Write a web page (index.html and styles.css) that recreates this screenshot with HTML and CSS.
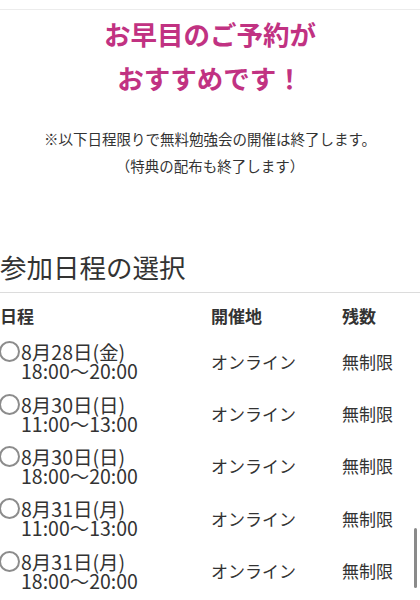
FILE: index.html
```html
<!DOCTYPE html>
<html lang="ja">
<head>
<meta charset="utf-8">
<title>参加日程の選択</title>
<link rel="stylesheet" href="styles.css">
</head>
<body>
<div class="topbar"></div>
<section class="intro">
  <h1 class="lead">お早目のご予約が<br>おすすめです！</h1>
  <p class="note">※以下日程限りで無料勉強会の開催は終了します。<br>（特典の配布も終了します）</p>
</section>
<section class="schedule">
  <h2 class="title">参加日程の選択</h2>
  <div class="table">
    <div class="row head">
      <div>日程</div><div>開催地</div><div>残数</div>
    </div>
    <label class="row">
      <div class="date"><span class="radio"></span><span>8月28日(金)<br>18:00〜20:00</span></div>
      <div>オンライン</div><div>無制限</div>
    </label>
    <label class="row">
      <div class="date"><span class="radio"></span><span>8月30日(日)<br>11:00〜13:00</span></div>
      <div>オンライン</div><div>無制限</div>
    </label>
    <label class="row">
      <div class="date"><span class="radio"></span><span>8月30日(日)<br>18:00〜20:00</span></div>
      <div>オンライン</div><div>無制限</div>
    </label>
    <label class="row">
      <div class="date"><span class="radio"></span><span>8月31日(月)<br>11:00〜13:00</span></div>
      <div>オンライン</div><div>無制限</div>
    </label>
    <label class="row">
      <div class="date"><span class="radio"></span><span>8月31日(月)<br>18:00〜20:00</span></div>
      <div>オンライン</div><div>無制限</div>
    </label>
  </div>
</section>
<div class="scrollbar"></div>
</body>
</html>
```
FILE: styles.css
```css
html, body {
  margin: 0;
  padding: 0;
  background: #fff;
  color: #333;
  font-family: "Noto Sans CJK JP", "Noto Sans", sans-serif;
  overflow: hidden;
}
.topbar {
  height: 9px;
  border-bottom: 1px solid #ececec;
}
.intro {
  text-align: center;
  padding-top: 2px;
}
.lead {
  margin: 0;
  font-size: 26.5px;
  line-height: 44px;
  font-weight: 700;
  color: #c13282;
}
.note {
  margin: 25px 0 0;
  font-size: 14.5px;
  line-height: 27px;
  color: #333;
}
.schedule {
  margin-top: 70px;
}
.title {
  margin: 0;
  font-size: 26.5px;
  line-height: 36px;
  font-weight: 400;
  color: #333;
  padding-bottom: 7px;
  border-bottom: 1px solid #dcdcdc;
}
.table {
  margin-top: 11px;
}
.row {
  display: grid;
  grid-template-columns: 211px 131px 1fr;
  align-items: center;
  font-size: 17px;
  height: 52.4px;
}
.row.head {
  height: 24px;
  line-height: 24px;
  font-weight: 700;
  margin-bottom: 7px;
}
.date {
  display: flex;
  align-items: flex-start;
  font-size: 19.5px;
  line-height: 19px;
}
.radio {
  flex: none;
  width: 21px;
  height: 21px;
  box-sizing: border-box;
  border: 2px solid #8c8c8c;
  border-radius: 50%;
  margin: -1px 1px 0 -1px;
  background: #fff;
}
.scrollbar {
  position: fixed;
  right: 3px;
  top: 528px;
  width: 3px;
  height: 60px;
  border-radius: 2px;
  background: #8a8a8a;
}
```
